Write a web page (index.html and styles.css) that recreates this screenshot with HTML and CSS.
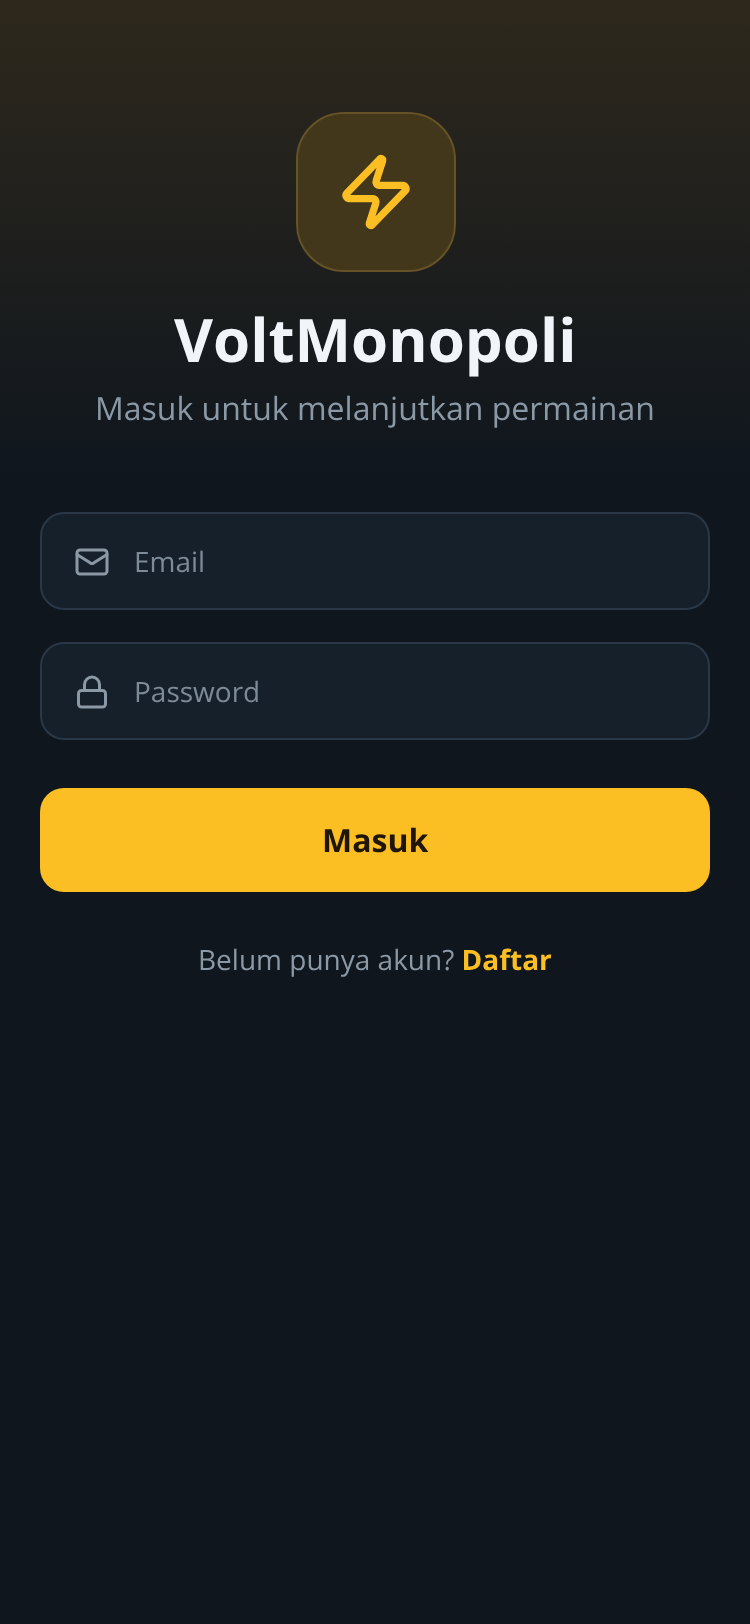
FILE: index.html
```html
<!DOCTYPE html>
<html lang="id">
<head>
<meta charset="utf-8">
<title>VoltMonopoli</title>
<link rel="stylesheet" href="styles.css">
</head>
<body>
<main class="screen">
  <div class="logo">
    <svg class="bolt" viewBox="0 0 24 24" fill="none" stroke="currentColor" stroke-width="2.2" stroke-linecap="round" stroke-linejoin="round"><path d="M4 14a1 1 0 0 1-.78-1.63l9.9-10.2a.5.5 0 0 1 .86.46l-1.92 6.02A1 1 0 0 0 13 10h7a1 1 0 0 1 .78 1.63l-9.9 10.2a.5.5 0 0 1-.86-.46l1.92-6.02A1 1 0 0 0 11 14z"/></svg>
  </div>
  <h1 class="title">VoltMonopoli</h1>
  <p class="subtitle">Masuk untuk melanjutkan permainan</p>
  <form class="form">
    <label class="field">
      <svg class="field-icon" viewBox="0 0 24 24" fill="none" stroke="currentColor" stroke-width="2" stroke-linecap="round" stroke-linejoin="round"><path d="m22 7-8.99 5.73a2 2 0 0 1-2.02 0L2 7"/><rect x="2" y="4" width="20" height="16" rx="2"/></svg>
      <span class="placeholder">Email</span>
    </label>
    <label class="field">
      <svg class="field-icon" viewBox="0 0 24 24" fill="none" stroke="currentColor" stroke-width="2" stroke-linecap="round" stroke-linejoin="round"><rect x="3" y="11" width="18" height="11" rx="2" ry="2"/><path d="M7 11V7a5 5 0 0 1 10 0v4"/></svg>
      <span class="placeholder">Password</span>
    </label>
    <button class="submit" type="button"><span class="submit-label">Masuk</span></button>
  </form>
  <p class="signup">Belum punya akun? <a class="signup-link" href="#">Daftar</a></p>
</main>
</body>
</html>
```
FILE: styles.css
```css
* { box-sizing: border-box; }
html, body { margin: 0; height: 100%; }
body {
  background: #0f161e;
  font-family: "Open Sans", sans-serif;
  text-rendering: geometricPrecision;
}
.screen {
  min-height: 1624px;
  padding: 112px 40px 0;
  display: flex;
  flex-direction: column;
  align-items: center;
  background: linear-gradient(180deg, #2e281c 0, #0f161e 480px);
}
.logo {
  width: 160px;
  height: 160px;
  margin-left: 2px;
  border-radius: 48px;
  border: 2px solid #655327;
  background: #42371b;
  color: #fbbf24;
  display: flex;
  align-items: center;
  justify-content: center;
}
.bolt { width: 80px; height: 80px; }
.title {
  margin: 29px 0 0;
  font-size: 60px;
  line-height: 76px;
  font-weight: 700;
  color: #f1f5f9;
  will-change: transform;
}
.subtitle {
  margin: 10px 0 0;
  font-size: 32px;
  line-height: 44px;
  color: #8b98a5;
  will-change: transform;
}
.form {
  width: 100%;
  margin-top: 81px;
  display: flex;
  flex-direction: column;
}
.field {
  height: 98px;
  margin-bottom: 32px;
  padding: 2px 32px 0;
  display: flex;
  align-items: center;
  gap: 24px;
  background: #16202a;
  border: 2px solid #2a3746;
  border-radius: 24px;
  color: #8b98a5;
}
.field-icon { width: 36px; height: 36px; flex: none; }
.placeholder { font-size: 28px; color: #7d8a97; will-change: transform; }
.submit {
  height: 104px;
  margin-top: 16px;
  padding: 0;
  border: 0;
  border-radius: 24px;
  background: #fbbf24;
  color: #1f1608;
  font: 700 32px "Open Sans", sans-serif;
  text-rendering: geometricPrecision;
}
.submit-label { display: inline-block; will-change: transform; }
.signup {
  margin: 48px 0 0;
  font-size: 28px;
  line-height: 40px;
  color: #8b98a5;
  will-change: transform;
}
.signup-link {
  color: #fbbf24;
  font-weight: 700;
  text-decoration: none;
}
```
